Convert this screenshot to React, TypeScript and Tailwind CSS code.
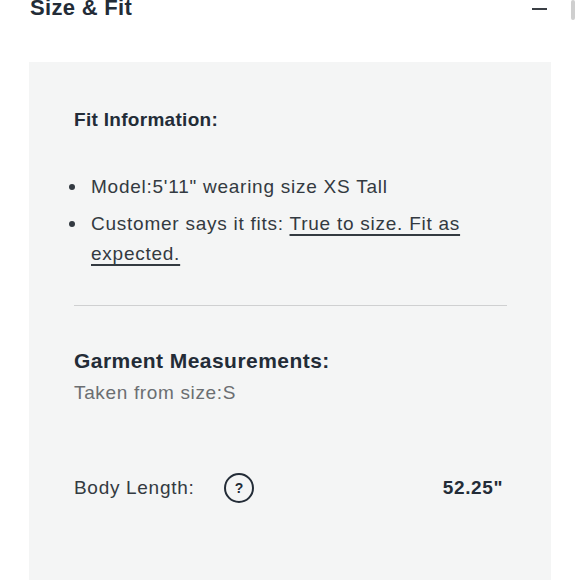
export default function App() {
  return (
    <div className="relative w-[580px] h-[580px] overflow-hidden bg-white font-['Liberation_Sans',Arial,sans-serif] text-[#333a41]">
      <div className="absolute right-[5px] top-0 w-[4px] h-[20px] rounded-full bg-[#cfcfcf]" aria-hidden="true" />

      <div className="flex justify-between items-start h-[62px] pl-[30px] pr-[33px]">
        <h2 className="mt-[-6px] text-[22px] leading-[28px] font-bold tracking-[0.3px] text-[#232c37]">
          Size &amp; Fit
        </h2>
        <div className="mt-[8px] w-[15px] h-[1.5px] bg-[#3a3f45]" aria-hidden="true" />
      </div>

      <section className="ml-[29px] w-[522px] h-[540px] bg-[#f4f5f5] pt-[46px] pl-[45px] pr-[44px]">
        <h3 className="text-[19px] leading-[24px] font-bold tracking-[0.3px] text-[#232c37]">Fit Information:</h3>

        <ul className="mt-[40px] flex flex-col gap-[7px] text-[19px] leading-[30px] tracking-[0.75px]">
          <li className="flex">
            <span className="-ml-[5px] w-[22px] h-[30px] flex items-center shrink-0">
              <span className="w-[6px] h-[6px] rounded-full bg-[#333a41]" />
            </span>
            <span>Model:5'11" wearing size XS Tall</span>
          </li>
          <li className="flex">
            <span className="-ml-[5px] w-[22px] h-[30px] flex items-center shrink-0">
              <span className="w-[6px] h-[6px] rounded-full bg-[#333a41]" />
            </span>
            <span>
              Customer says it fits:{" "}
              <span className="underline underline-offset-[4px] decoration-[1.5px]">True to size. Fit as expected.</span>
            </span>
          </li>
        </ul>

        <div className="mt-[36px] h-px bg-[#cfd0d1]" />

        <h3 className="mt-[43px] text-[21px] leading-[24px] font-bold tracking-[0.45px] text-[#232c37]">
          Garment Measurements:
        </h3>
        <p className="mt-[8px] text-[19px] leading-[24px] tracking-[0.65px] text-[#6b6e71]">Taken from size:S</p>

        <div className="mt-[68px] flex items-center h-[30px] text-[19px] tracking-[0.7px]">
          <span className="w-[150px]">Body Length:</span>
          <span className="w-[30px] h-[30px] rounded-full border-[2.5px] border-[#232c37] flex items-center justify-center text-[14px] font-bold tracking-normal text-[#232c37]">
            ?
          </span>
          <span className="ml-auto mr-[4px] font-bold tracking-[0.6px] text-[#232c37]">52.25"</span>
        </div>
      </section>
    </div>
  )
}
